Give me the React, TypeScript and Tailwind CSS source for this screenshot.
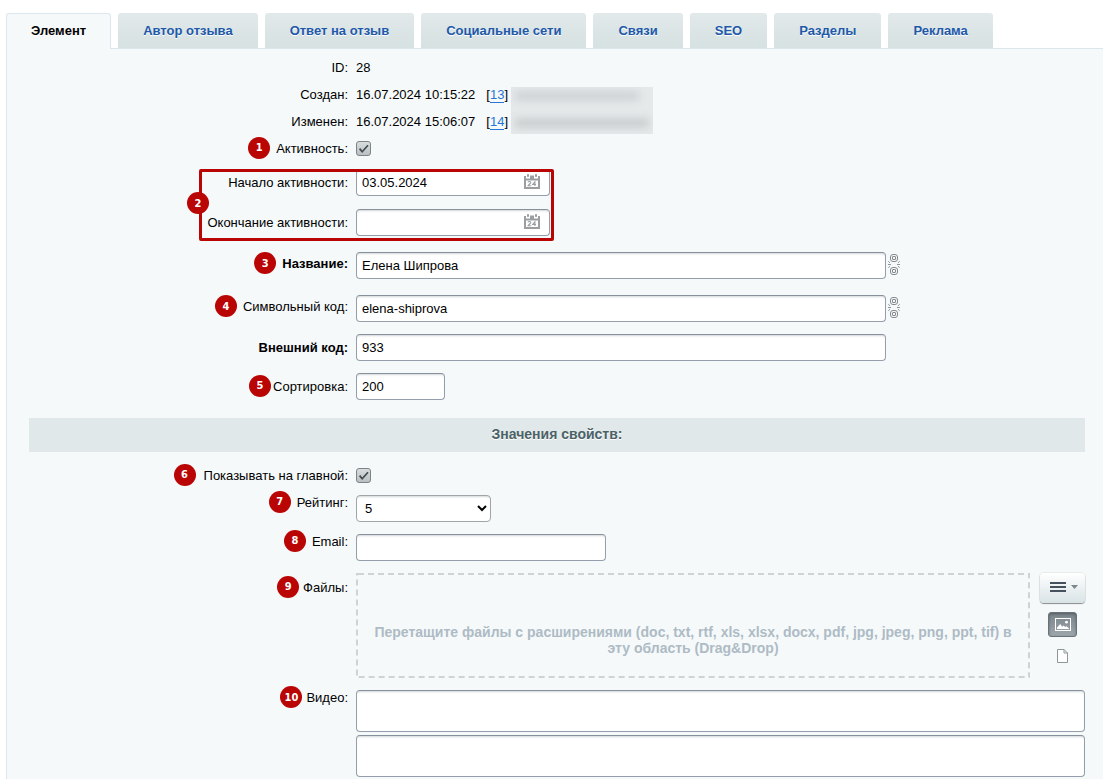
import React, { useState } from "react";
import clsx from "clsx";

const TABS = ["Элемент", "Автор отзыва", "Ответ на отзыв", "Социальные сети", "Связи", "SEO", "Разделы", "Реклама"];

const FIELD =
  "block rounded border border-[#959ead] border-t-[#87919c] bg-white px-[5px] text-black shadow-[inset_0_2px_2px_-1px_rgba(130,140,150,0.35)] outline-none focus:border-sky-500";

function Badge({ n }: { n: number }) {
  return (
    <span className="mb-0.5 flex size-[22px] shrink-0 items-center justify-center rounded-full bg-[#b90504] font-['DejaVu_Sans_Condensed','DejaVu_Sans',sans-serif] text-[11px] leading-none font-bold text-white">
      {n}
    </span>
  );
}

type RowProps = {
  label: string;
  htmlFor?: string;
  badge?: number;
  bold?: boolean;
  height?: string;
  labelClass?: string;
  children: React.ReactNode;
};

function Row({ label, htmlFor, badge, bold, height = "h-[27px]", labelClass = "gap-1.5", children }: RowProps) {
  return (
    <div className={clsx("grid grid-cols-[319px_minmax(0,1fr)] items-center gap-2", height)}>
      <div className={clsx("flex items-center justify-end", labelClass)}>
        {badge !== undefined && <Badge n={badge} />}
        {htmlFor ? (
          <label htmlFor={htmlFor} className={clsx(bold && "font-bold")}>
            {label}
          </label>
        ) : (
          <span>{label}</span>
        )}
      </div>
      <div className="flex items-center">{children}</div>
    </div>
  );
}

function Check({ id }: { id: string }) {
  return (
    <span className="grid size-[15px] place-items-center">
      <input
        id={id}
        type="checkbox"
        defaultChecked
        className="peer col-start-1 row-start-1 size-[15px] appearance-none rounded-[3px] border border-[#7d8488] bg-linear-to-b from-[#d8dcdd] to-[#b9c0c3]"
      />
      <svg
        viewBox="0 0 15 15"
        aria-hidden="true"
        className="pointer-events-none invisible col-start-1 row-start-1 size-[15px] peer-checked:visible"
      >
        <path d="M3.6 7.6 6.2 10.8 12 4.2" fill="none" stroke="#434b50" strokeWidth="1.7" />
      </svg>
    </span>
  );
}

function DateField({ id, value }: { id: string; value: string }) {
  return (
    <div className="grid w-[194px] items-center">
      <input id={id} type="text" defaultValue={value} className={clsx(FIELD, "col-start-1 row-start-1 h-[27px] w-full pr-7")} />
      <button type="button" aria-label="Выбрать дату" className="col-start-1 row-start-1 mr-[10px] mb-0.5 justify-self-end">
        <svg width="16" height="15" viewBox="0 0 16 15" fill="none" className="block" aria-hidden="true">
          <path d="M0 2h2v2.5h4V2h4v2.5h4V2h2v13H0z" fill="#9b9fa2" />
          <path d="M2 6.5h12V13H2z" fill="#fff" />
          <rect x="3" y="0" width="2" height="3" rx="0.8" fill="#9b9fa2" />
          <rect x="11" y="0" width="2" height="3" rx="0.8" fill="#9b9fa2" />
          <path d="M6 2h4" stroke="#9b9fa2" />
          <path d="M4 8.2c.3-.8 2.8-1 2.8.4 0 1-2.2 2-2.8 3.1h3.2M10.9 12V7.8L8.7 10.5H12" stroke="#9b9fa2" strokeWidth="1.1" />
        </svg>
      </button>
    </div>
  );
}

function ChainButton() {
  return (
    <button type="button" aria-label="Связь с названием" className="mb-0.5 ml-[2px] shrink-0">
      <svg width="12" height="21" viewBox="0 0 12 21" fill="none" stroke="#85898c" className="block" aria-hidden="true">
        <rect x="2.5" y="0.5" width="7" height="7" rx="2.5" />
        <rect x="4.5" y="2.5" width="3" height="3" rx="0.5" />
        <rect x="2.5" y="13.5" width="7" height="7" rx="2.5" />
        <rect x="4.5" y="15.5" width="3" height="3" rx="0.5" />
        <path d="M0 10.5h3M9 10.5h3M.3 7.3l1.8 1.6M11.7 7.3L9.9 8.9M.3 13.7l1.8-1.6M11.7 13.7l-1.8-1.6" strokeWidth="0.9" />
      </svg>
    </button>
  );
}

export default function App() {
  const [active, setActive] = useState(0);

  return (
    <main className="flex min-h-screen flex-col bg-white pt-[13px] pl-[6px] font-['Liberation_Sans',Arial,sans-serif] text-[13px] leading-4 text-black">
      <nav role="tablist" className="flex shrink-0 gap-[7px]">
        {TABS.map((tab, i) => (
          <button
            key={tab}
            type="button"
            role="tab"
            aria-selected={active === i}
            onClick={() => setActive(i)}
            className={clsx(
              "rounded-t-[3px] font-bold whitespace-nowrap [text-shadow:0_1px_0_#fff]",
              active === i
                ? "z-10 -mb-px h-9 border border-b-0 border-[#dce7ed] bg-[#f5f9fa] px-6 pb-0.5 text-black"
                : "h-[35px] bg-linear-to-b from-[#e2e9ea] to-[#d6e1e2] px-[25px] text-[#2158a8]",
            )}
          >
            {tab}
          </button>
        ))}
      </nav>

      <form className="flex-1 border-t border-l border-[#dce7ed] bg-[#f5f9fa] pt-[5px] pr-[18px] pb-0.5 pl-[22px]">
        <Row label="ID:">28</Row>
        <div className="relative">
          <Row label="Создан:">
            16.07.2024 10:15:22
            <span className="ml-[11px]">
              [<a href="#user-13" className="border-b border-[#2675d7] text-[#2675d7]">13</a>]
            </span>
          </Row>
          <Row label="Изменен:">
            16.07.2024 15:06:07
            <span className="ml-[11px]">
              [<a href="#user-14" className="border-b border-[#2675d7] text-[#2675d7]">14</a>]
            </span>
          </Row>
          <div
            aria-hidden="true"
            className="absolute top-[6px] left-[482px] flex h-[47px] w-[142px] flex-col gap-[19px] overflow-hidden bg-[#e5e9ea] px-1 pt-[5px]"
          >
            <div className="h-2 w-[124px] bg-[#cbcecf] blur-[4px]" />
            <div className="h-2 w-[134px] bg-[#c5c8c9] blur-[4px]" />
          </div>
        </div>
        <Row label="Активность:" htmlFor="active" badge={1}>
          <Check id="active" />
        </Row>

        <div className="relative">
          <Row label="Начало активности:" htmlFor="from" height="h-10" labelClass="pt-0.5">
            <DateField id="from" value="03.05.2024" />
          </Row>
          <Row label="Окончание активности:" htmlFor="to" height="h-10" labelClass="pt-0.5">
            <DateField id="to" value="" />
          </Row>
          <div className="pointer-events-none absolute top-[7px] left-[170px] h-[72px] w-[355px] rounded-[2px] border-3 border-[#b90504]">
            <div className="absolute top-[20px] -left-[15px]">
              <Badge n={2} />
            </div>
          </div>
        </div>

        <Row label="Название:" htmlFor="name" badge={3} bold height="h-[46px]" labelClass="gap-1.5 pb-0.5">
          <input id="name" type="text" defaultValue="Елена Шипрова" className={clsx(FIELD, "h-[27px] w-[530px]")} />
          <ChainButton />
        </Row>
        <Row label="Символьный код:" htmlFor="code" badge={4} height="h-10" labelClass="gap-1.5 pb-0.5">
          <input id="code" type="text" defaultValue="elena-shiprova" className={clsx(FIELD, "h-[27px] w-[530px]")} />
          <ChainButton />
        </Row>
        <Row label="Внешний код:" htmlFor="xml" bold height="h-[39px]">
          <input id="xml" type="text" defaultValue="933" className={clsx(FIELD, "h-[27px] w-[530px]")} />
        </Row>
        <Row label="Сортировка:" htmlFor="sort" badge={5} height="h-[39px]" labelClass="gap-0.5">
          <input id="sort" type="text" defaultValue="200" className={clsx(FIELD, "h-[27px] w-[89px]")} />
        </Row>

        <h2 className="mt-3 mb-[10px] flex h-[34px] items-center justify-center bg-[#e0e8ea] pb-0.5 text-sm font-bold text-[#4b6267] [text-shadow:0_1px_0_#fff]">
          Значения свойств:
        </h2>

        <Row label="Показывать на главной:" htmlFor="main" badge={6} labelClass="gap-2">
          <Check id="main" />
        </Row>
        <Row label="Рейтинг:" htmlFor="rating" badge={7} height="h-[39px]" labelClass="gap-1.5 pb-3">
          <select
            id="rating"
            defaultValue="5"
            className="h-[27px] w-[135px] rounded border border-[#9fa5a8] bg-white px-1 text-[13px] text-black shadow-[inset_0_2px_2px_-1px_rgba(130,140,150,0.35)]"
          >
            <option>1</option>
            <option>2</option>
            <option>3</option>
            <option>4</option>
            <option>5</option>
          </select>
        </Row>
        <Row label="Email:" htmlFor="email" badge={8} height="h-[39px]" labelClass="gap-1.5 pb-3">
          <input id="email" type="email" className={clsx(FIELD, "h-[27px] w-[250px]")} />
        </Row>

        <div className="mt-1.5 grid grid-cols-[319px_minmax(0,1fr)] gap-2">
          <div className="flex h-[29px] items-center justify-end gap-1">
            <Badge n={9} />
            <span>Файлы:</span>
          </div>
          <div className="flex">
            <div className="relative flex h-[105px] min-w-0 flex-1 items-center justify-center px-4 pt-[29px] text-center text-[14px] font-bold text-[#aebbc5]">
              <svg className="pointer-events-none absolute inset-0 size-full" aria-hidden="true">
                <rect
                  x="0"
                  y="0"
                  width="100%"
                  height="100%"
                  rx="2"
                  fill="none"
                  stroke="#d0d3d4"
                  strokeWidth="4"
                  strokeDasharray="6 4"
                />
              </svg>
              Перетащите файлы с расширениями (doc, txt, rtf, xls, xlsx, docx, pdf, jpg, jpeg, png, ppt, tif) в эту область
              (Drag&amp;Drop)
            </div>
            <div className="ml-[10px] flex w-[45px] flex-col items-center">
              <button
                type="button"
                aria-label="Меню"
                className="flex h-[30px] w-full items-center justify-center rounded bg-linear-to-b from-white to-[#d9e3e6] pb-0.5 pl-0.5 shadow-[0_1px_1px_rgba(0,0,0,0.4),0_0_0_1px_rgba(0,0,0,0.06)]"
              >
                <svg width="28" height="10" viewBox="0 0 28 10" aria-hidden="true">
                  <path d="M0 0h16v2H0zM0 4h16v2H0zM0 8h16v2H0z" fill="#45525d" />
                  <path d="M21 3h7l-3.5 4z" fill="#7b868d" />
                </svg>
              </button>
              <button
                type="button"
                aria-label="Показывать изображения"
                className="mt-[9px] flex h-[25px] w-[29px] items-center justify-center rounded-[3px] border border-[#697377] bg-linear-to-b from-[#79838a] to-[#9ea7ac] shadow-[inset_0_1px_3px_rgba(0,0,0,0.3)]"
              >
                <svg width="16" height="13" viewBox="0 0 16 13" fill="none" aria-hidden="true">
                  <rect x="0.5" y="0.5" width="15" height="12" stroke="#fff" />
                  <path d="M2 11V9.7L5.2 6 7.2 8.7 8.7 7.5 10.2 9 11.5 8.3 14 10.5V11z" fill="#fff" />
                  <circle cx="11.5" cy="4.2" r="1.4" fill="#fff" />
                </svg>
              </button>
              <button type="button" aria-label="Показывать файлы" className="mt-3">
                <svg width="11" height="14" viewBox="0 0 11 14" fill="none" stroke="#8d9699" className="block" aria-hidden="true">
                  <path d="M.5.5h6.5l3.5 3.5v9.5H.5z" fill="#fff" />
                  <path d="M7 .5V4h3.5" />
                </svg>
              </button>
            </div>
          </div>
        </div>

        <div className="mt-3 grid grid-cols-[319px_minmax(0,1fr)] gap-2">
          <div className="flex h-4 items-center justify-end gap-1">
            <Badge n={10} />
            <label htmlFor="video-1">Видео:</label>
          </div>
          <div className="flex flex-col gap-[3px]">
            <textarea id="video-1" className={clsx(FIELD, "h-[42px] w-full resize-none")} />
            <textarea id="video-2" aria-label="Видео 2" className={clsx(FIELD, "h-[42px] w-full resize-none")} />
          </div>
        </div>
      </form>
    </main>
  );
}
